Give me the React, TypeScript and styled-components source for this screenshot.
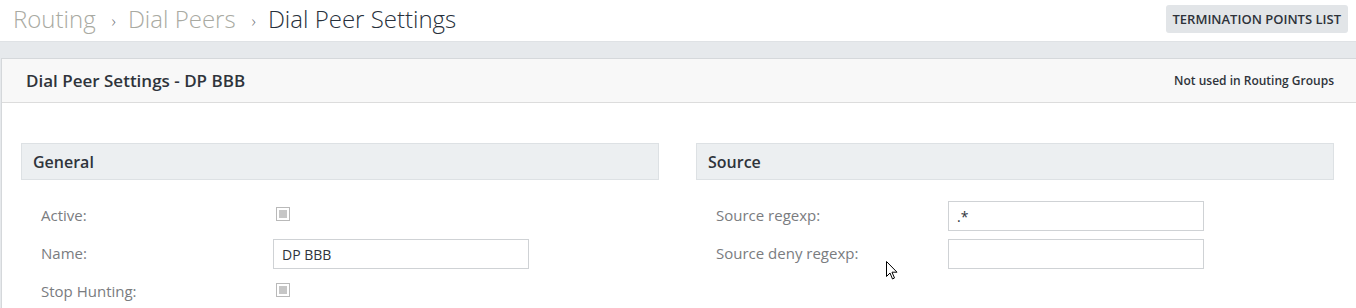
import React from 'react'
import styled, { createGlobalStyle } from 'styled-components'

const GlobalStyle = createGlobalStyle`
  html, body {
    margin: 0;
    padding: 0;
    background: #ffffff;
    font-family: "Open Sans", "Liberation Sans", sans-serif;
    color: #333;
  }
  * { box-sizing: border-box; }
`

type Field =
  | { label: string; kind: 'check' }
  | { label: string; kind: 'text'; value: string }

const generalFields: Field[] = [
  { label: 'Active:', kind: 'check' },
  { label: 'Name:', kind: 'text', value: 'DP BBB' },
  { label: 'Stop Hunting:', kind: 'check' },
]

const sourceFields: Field[] = [
  { label: 'Source regexp:', kind: 'text', value: '.*' },
  { label: 'Source deny regexp:', kind: 'text', value: '' },
]

const Page = styled.div`
  position: relative;
  width: 1356px;
  height: 308px;
  overflow: hidden;
`

const TopBar = styled.header`
  height: 42px;
  display: flex;
  align-items: center;
  justify-content: space-between;
  padding: 0 8px 0 13px;
  background: #fff;
  border-bottom: 1px solid #dfe2e5;
`

const Crumbs = styled.nav`
  display: flex;
  align-items: center;
  font-size: 24px;
  font-weight: 300;
  line-height: 1;
  margin-top: -3px;
`

const Crumb = styled.span<{ $current?: boolean }>`
  color: ${(p) => (p.$current ? '#27303b' : '#a9aaa2')};
`

const Sep = styled.span`
  font-size: 17px;
  color: #6f7277;
  margin: 2px 12px 0 16px;
`

const ListButton = styled.button`
  height: 28px;
  margin-top: -3px;
  padding: 0 7px;
  border: 0;
  border-radius: 3px;
  background: #e2e5e8;
  color: #2e333a;
  font-family: inherit;
  font-size: 13px;
  font-weight: 600;
`

const Main = styled.main`
  background: #e6e9ec;
  padding: 16px 0 0 1px;
`

const Panel = styled.section`
  background: #fff;
  border-left: 1px solid #d5d8db;
  border-top: 1px solid #d5d8db;
  height: 260px;
`

const PanelHead = styled.div`
  height: 44px;
  display: flex;
  align-items: center;
  justify-content: space-between;
  padding: 0 22px 0 24px;
  background: #f8f8f8;
  border-bottom: 1px solid #dcdcdc;
`

const PanelTitle = styled.h2`
  margin: 0;
  font-size: 17px;
  font-weight: 600;
  color: #2f343b;
`

const Usage = styled.span`
  font-size: 12px;
  font-weight: 600;
  color: #2f343b;
`

const Columns = styled.div`
  display: grid;
  grid-template-columns: 638px 638px;
  column-gap: 37px;
  padding: 40px 0 0 19px;
`

const SectionHead = styled.h3`
  margin: 0;
  height: 37px;
  display: flex;
  align-items: center;
  padding-left: 11px;
  background: #eceff1;
  border: 1px solid #dde1e4;
  font-size: 16px;
  font-weight: 600;
  color: #2f343b;
`

const Rows = styled.div`
  display: flex;
  flex-direction: column;
  gap: 8px;
  padding: 21px 0 0 20px;
`

const Row = styled.div`
  display: grid;
  grid-template-columns: 232px 256px;
  align-items: center;
  height: 30px;
`

const Label = styled.label`
  font-size: 15px;
  color: #7a7c7f;
  margin-bottom: 2px;
`

const Control = styled.div`
  display: flex;
  align-items: center;
  height: 30px;
`

const TextInput = styled.input`
  width: 256px;
  height: 30px;
  padding: 0 8px;
  border: 1px solid #cfd2d5;
  background: #fff;
  font-family: inherit;
  font-size: 14px;
  color: #2f343b;
  outline: none;
`

const Check = styled.span`
  display: block;
  width: 14px;
  height: 14px;
  margin: 0 0 4px 3px;
  border: 1px solid #b9b9b9;
  padding: 2px;
  background: #fff;
  &::after {
    content: '';
    display: block;
    width: 100%;
    height: 100%;
    background: #c6c6c6;
  }
`

const Cursor = styled.svg`
  position: absolute;
  left: 886px;
  top: 261px;
`

const FieldRows: React.FC<{ fields: Field[] }> = ({ fields }) => (
  <Rows>
    {fields.map((f) => (
      <Row key={f.label}>
        <Label>{f.label}</Label>
        <Control>
          {f.kind === 'check' ? (
            <Check />
          ) : (
            <TextInput defaultValue={f.value} readOnly />
          )}
        </Control>
      </Row>
    ))}
  </Rows>
)

export default function App() {
  return (
    <Page>
      <GlobalStyle />
      <TopBar>
        <Crumbs>
          <Crumb>Routing</Crumb>
          <Sep>›</Sep>
          <Crumb>Dial Peers</Crumb>
          <Sep>›</Sep>
          <Crumb $current>Dial Peer Settings</Crumb>
        </Crumbs>
        <ListButton>TERMINATION POINTS LIST</ListButton>
      </TopBar>
      <Main>
        <Panel>
          <PanelHead>
            <PanelTitle>Dial Peer Settings - DP BBB</PanelTitle>
            <Usage>Not used in Routing Groups</Usage>
          </PanelHead>
          <Columns>
            <div>
              <SectionHead>General</SectionHead>
              <FieldRows fields={generalFields} />
            </div>
            <div>
              <SectionHead>Source</SectionHead>
              <FieldRows fields={sourceFields} />
            </div>
          </Columns>
        </Panel>
      </Main>
      <Cursor width="12" height="20" viewBox="0 0 12 20">
        <path
          d="M0.5 0.5 L0.5 15.5 L4 12 L6.5 18 L8.5 17 L6 11.2 L11 11.2 Z"
          fill="#fff"
          stroke="#000"
          strokeWidth="1"
          strokeLinejoin="miter"
        />
      </Cursor>
    </Page>
  )
}
